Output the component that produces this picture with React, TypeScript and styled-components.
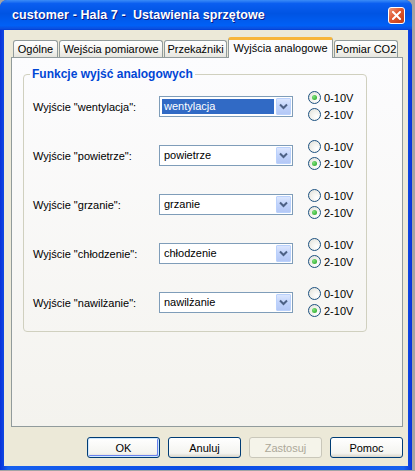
import React from "react";
import styled, { createGlobalStyle } from "styled-components";

const GlobalStyle = createGlobalStyle`
  html, body {
    margin: 0;
    padding: 0;
    background: #a4a4a4;
  }
  body {
    font-family: "Liberation Sans", Arial, sans-serif;
    font-size: 11px;
    color: #000;
  }
`;

const Window = styled.div`
  width: 412px;
  height: 470px;
  display: flex;
  flex-direction: column;
  border-radius: 7px 7px 0 0;
  overflow: hidden;
  background: #0842dc;
`;

const TitleBar = styled.div`
  height: 30px;
  flex: none;
  display: flex;
  align-items: center;
  justify-content: space-between;
  padding: 0 7px 0 12px;
  background: linear-gradient(
    to bottom,
    #3b8cf7 0%,
    #0a5ef0 12%,
    #0054e3 45%,
    #0060f6 85%,
    #0a50e0 95%,
    #003dd7 100%
  );
`;

const Title = styled.span`
  color: #fff;
  font-weight: bold;
  font-size: 12.5px;
  letter-spacing: 0.1px;
  white-space: pre;
  text-shadow: 1px 1px 0 #0a1883;
`;

const CloseButton = styled.div`
  width: 15px;
  height: 15px;
  border: 1px solid #fff;
  border-radius: 3px;
  display: flex;
  align-items: center;
  justify-content: center;
  background: linear-gradient(135deg, #ee9a7c 0%, #e0572e 45%, #c23d14 100%);
`;

const Frame = styled.div`
  flex: 1;
  display: flex;
  padding: 0 4px 4px;
  background: linear-gradient(to right, #0831d9, #1660ee 2%, #0a4ae4 50%, #1660ee 98%, #0831d9);
`;

const Content = styled.div`
  flex: 1;
  display: flex;
  flex-direction: column;
  padding: 7px 5px 8px 7px;
  background: #ece9d8;
`;

const TabStrip = styled.div`
  height: 20px;
  display: flex;
  align-items: flex-end;
  gap: 1px;
  padding-left: 2px;
  position: relative;
  z-index: 1;
`;

const Tab = styled.div<{ $width: number; $active?: boolean }>`
  width: ${(p) => p.$width}px;
  box-sizing: border-box;
  height: ${(p) => (p.$active ? 21 : 17)}px;
  margin-bottom: ${(p) => (p.$active ? -1 : 0)}px;
  display: flex;
  align-items: center;
  justify-content: center;
  border: 1px solid #919b9c;
  border-bottom: none;
  border-top: ${(p) => (p.$active ? "3px solid #f7b53a" : "1px solid #919b9c")};
  border-radius: 3px 3px 0 0;
  padding-bottom: ${(p) => (p.$active ? 2 : 0)}px;
  background: ${(p) =>
    p.$active ? "#fcfcfe" : "linear-gradient(to bottom, #ffffff, #f3f3ef 60%, #e6e5de)"};
  white-space: nowrap;
`;

const Panel = styled.div`
  height: 370px;
  box-sizing: border-box;
  border: 1px solid #919b9c;
  background: linear-gradient(to bottom, #fcfcfe, #f4f3ee);
  padding: 9px 0 0 11px;
`;

const Group = styled.fieldset`
  width: 344px;
  box-sizing: border-box;
  margin: 0;
  padding: 8px 0 12px 9px;
  border: 1px solid #d0d0bf;
  border-radius: 4px;
`;

const Legend = styled.legend`
  color: #0046d5;
  font-weight: bold;
  font-size: 12px;
  line-height: 14px;
  padding: 0 2px;
  margin-left: -3px;
`;

const Rows = styled.div`
  display: flex;
  flex-direction: column;
  gap: 15px;
`;

const Row = styled.div`
  height: 34px;
  display: flex;
  align-items: center;
`;

const Label = styled.span`
  width: 126px;
  flex: none;
  white-space: nowrap;
  padding-top: 1px;
`;

const Combo = styled.div`
  width: 134px;
  height: 21px;
  box-sizing: border-box;
  flex: none;
  margin-right: 15px;
  display: flex;
  padding: 1px;
  border: 1px solid #7f9db9;
  background: #fff;
`;

const ComboValue = styled.span<{ $focused?: boolean }>`
  flex: 1;
  display: flex;
  align-items: center;
  margin: 1px 2px 1px 1px;
  padding-left: 2px;
  background: ${(p) => (p.$focused ? "#316ac5" : "transparent")};
  color: ${(p) => (p.$focused ? "#fff" : "#000")};
`;

const ComboButton = styled.span`
  width: 15px;
  flex: none;
  display: flex;
  align-items: center;
  justify-content: center;
  box-sizing: border-box;
  border: 1px solid #bad1fc;
  border-radius: 1px;
  background: linear-gradient(to bottom, #dbe6fe, #c1d3fb 50%, #b4c8f6);
`;

const RadioGroup = styled.div`
  display: flex;
  flex-direction: column;
`;

const RadioItem = styled.label`
  height: 17px;
  display: flex;
  align-items: center;
  gap: 3px;
`;

const RadioCircle = styled.span<{ $checked?: boolean }>`
  width: 13px;
  height: 13px;
  box-sizing: border-box;
  border-radius: 50%;
  border: 1px solid #1c5180;
  background: radial-gradient(circle at 70% 70%, #ffffff 0%, #f1f1ec 50%, #dcdcd5 100%);
  display: flex;
  align-items: center;
  justify-content: center;

  &::after {
    content: "";
    display: ${(p) => (p.$checked ? "block" : "none")};
    width: 5px;
    height: 5px;
    border-radius: 50%;
    background: radial-gradient(circle at 35% 35%, #7ee27a, #21a121);
  }
`;

const ButtonRow = styled.div`
  display: flex;
  justify-content: flex-end;
  gap: 8px;
  margin-top: 10px;
  padding-right: 0;
`;

const Button = styled.div<{ $default?: boolean; $disabled?: boolean }>`
  width: 73px;
  height: 21px;
  box-sizing: border-box;
  display: flex;
  align-items: center;
  justify-content: center;
  border-radius: 3px;
  border: 1px solid ${(p) => (p.$disabled ? "#c9c7ba" : "#003c74")};
  color: ${(p) => (p.$disabled ? "#aca899" : "#000")};
  background: ${(p) =>
    p.$disabled
      ? "#f5f4ea"
      : "linear-gradient(to bottom, #ffffff, #f4f4f0 80%, #d8d4c8)"};
  box-shadow: ${(p) =>
    p.$default ? "inset 0 0 0 1px #cee7ff, inset -1px -1px 0 1px #6982ee" : "none"};
`;

const Chevron = () => (
  <svg width="9" height="7" viewBox="0 0 9 7">
    <path d="M1 1.5 L4.5 5 L8 1.5" fill="none" stroke="#4d6185" strokeWidth="2" />
  </svg>
);

const CloseIcon = () => (
  <svg width="9" height="9" viewBox="0 0 9 9">
    <path d="M1 1 L8 8 M8 1 L1 8" stroke="#fff" strokeWidth="2" strokeLinecap="square" />
  </svg>
);

const tabs = [
  { label: "Ogólne", width: 45 },
  { label: "Wejścia pomiarowe", width: 104 },
  { label: "Przekaźniki", width: 63 },
  { label: "Wyjścia analogowe", width: 105, active: true },
  { label: "Pomiar CO2", width: 64 },
];

const outputs = [
  { name: "wentylacja", mode: "0-10V", focused: true },
  { name: "powietrze", mode: "2-10V" },
  { name: "grzanie", mode: "2-10V" },
  { name: "chłodzenie", mode: "2-10V" },
  { name: "nawilżanie", mode: "2-10V" },
];

const modes = ["0-10V", "2-10V"];

const App = () => {
  return (
    <>
      <GlobalStyle />
      <Window>
        <TitleBar>
          <Title>customer - Hala 7 -  Ustawienia sprzętowe</Title>
          <CloseButton>
            <CloseIcon />
          </CloseButton>
        </TitleBar>
        <Frame>
          <Content>
            <TabStrip>
              {tabs.map((t) => (
                <Tab key={t.label} $width={t.width} $active={t.active}>
                  {t.label}
                </Tab>
              ))}
            </TabStrip>
            <Panel>
              <Group>
                <Legend>Funkcje wyjść analogowych</Legend>
                <Rows>
                  {outputs.map((o) => (
                    <Row key={o.name}>
                      <Label>Wyjście "{o.name}":</Label>
                      <Combo>
                        <ComboValue $focused={o.focused}>{o.name}</ComboValue>
                        <ComboButton>
                          <Chevron />
                        </ComboButton>
                      </Combo>
                      <RadioGroup>
                        {modes.map((m) => (
                          <RadioItem key={m}>
                            <RadioCircle $checked={o.mode === m} />
                            {m}
                          </RadioItem>
                        ))}
                      </RadioGroup>
                    </Row>
                  ))}
                </Rows>
              </Group>
            </Panel>
            <ButtonRow>
              <Button $default>OK</Button>
              <Button>Anuluj</Button>
              <Button $disabled>Zastosuj</Button>
              <Button>Pomoc</Button>
            </ButtonRow>
          </Content>
        </Frame>
      </Window>
    </>
  );
};

export default App;
